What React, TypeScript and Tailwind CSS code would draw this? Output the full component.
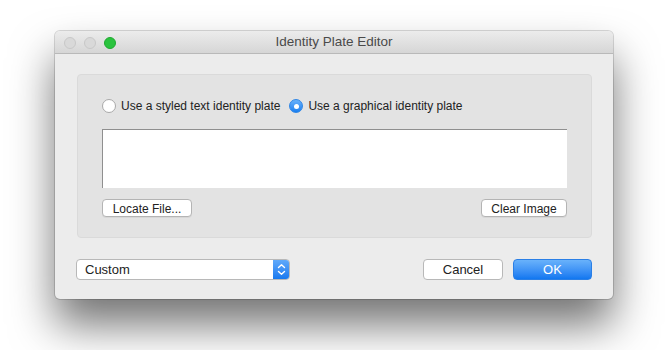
export default function App() {
  return (
    <div
      className="h-[350px] w-[669px] bg-white pl-[55px] pt-[31px]"
      style={{ fontFamily: '"Liberation Sans", Arial, sans-serif' }}
    >
      <div className="flex h-[268px] w-[558px] flex-col overflow-hidden rounded-[5px] bg-[#ececec] shadow-[0_26px_44px_0px_rgba(0,0,0,0.55),0_0_0_1px_rgba(0,0,0,0.15)]">
        {/* title bar */}
        <div className="relative flex h-[23px] items-center justify-center border-b border-[#b9b9b9] bg-gradient-to-b from-[#ececec] to-[#d6d6d6]">
          <div className="absolute left-[9px] top-[6px] flex gap-[8px]">
            <span className="h-[12px] w-[12px] rounded-full border border-[#c8c8c8] bg-[#d9d9d9]" />
            <span className="h-[12px] w-[12px] rounded-full border border-[#c8c8c8] bg-[#d9d9d9]" />
            <span className="h-[12px] w-[12px] rounded-full border border-[#1faa30] bg-[#2ac33e]" />
          </div>
          <span className="text-[13.5px] text-[#4a4a4a]">Identity Plate Editor</span>
        </div>

        <div className="flex flex-col px-[21px] pt-[20px]">
          {/* inner group box */}
          <div className="ml-px flex h-[164px] w-[515px] flex-col rounded-[4px] border border-[#dadada] bg-[#e3e3e3] px-[24px] pt-[24px]">
            <div className="flex h-[14px] items-center text-[12px] text-[#222]">
              <span className="mr-[5px] h-[14px] w-[14px] rounded-full border border-[#a9a9a9] bg-white" />
              <span>Use a styled text identity plate</span>
              <span className="ml-[9px] mr-[5px] flex h-[14px] w-[14px] items-center justify-center rounded-full border border-[#2f86e6] bg-gradient-to-b from-[#68b1fa] to-[#167ff0]">
                <span className="h-[5px] w-[5px] rounded-full bg-white" />
              </span>
              <span>Use a graphical identity plate</span>
            </div>

            <div className="mt-[16px] h-[59px] w-[465px] border-l border-t border-[#8f8f8f] bg-white" />

            <div className="mt-[11px] flex w-[465px] justify-between">
              <button className="h-[18px] w-[90px] rounded-[4px] border border-[#b4b4b4] bg-white text-[12px] text-[#222] shadow-[0_1px_0_rgba(0,0,0,0.05)]">
                Locate File...
              </button>
              <button className="h-[18px] w-[86px] rounded-[4px] border border-[#b4b4b4] bg-white text-[12px] text-[#222] shadow-[0_1px_0_rgba(0,0,0,0.05)]">
                Clear Image
              </button>
            </div>
          </div>

          {/* bottom row */}
          <div className="mt-[21px] flex items-center">
            <div className="flex h-[21px] w-[214px] items-stretch overflow-hidden rounded-[4px] border border-[#b8b8b8] bg-white">
              <span className="flex flex-1 items-center pl-[8px] text-[13px] text-[#222]">Custom</span>
              <span className="flex w-[16px] items-center justify-center bg-gradient-to-b from-[#5fa9fa] to-[#1679ef]">
                <svg width="9" height="13" viewBox="0 0 9 13" fill="none" stroke="white" strokeWidth="1.4" strokeLinecap="round" strokeLinejoin="round">
                  <path d="M1.5 4.5 L4.5 1.8 L7.5 4.5" />
                  <path d="M1.5 8.5 L4.5 11.2 L7.5 8.5" />
                </svg>
              </span>
            </div>
            <div className="ml-auto flex gap-[10px]">
              <button className="h-[21px] w-[80px] rounded-[4px] border border-[#b8b8b8] bg-white text-[13px] text-[#222]">
                Cancel
              </button>
              <button className="h-[21px] w-[79px] rounded-[4px] border border-[#2a7fe6] bg-gradient-to-b from-[#69b2fb] to-[#0f77f0] text-[13px] text-white">
                OK
              </button>
            </div>
          </div>
        </div>
      </div>
    </div>
  );
}
